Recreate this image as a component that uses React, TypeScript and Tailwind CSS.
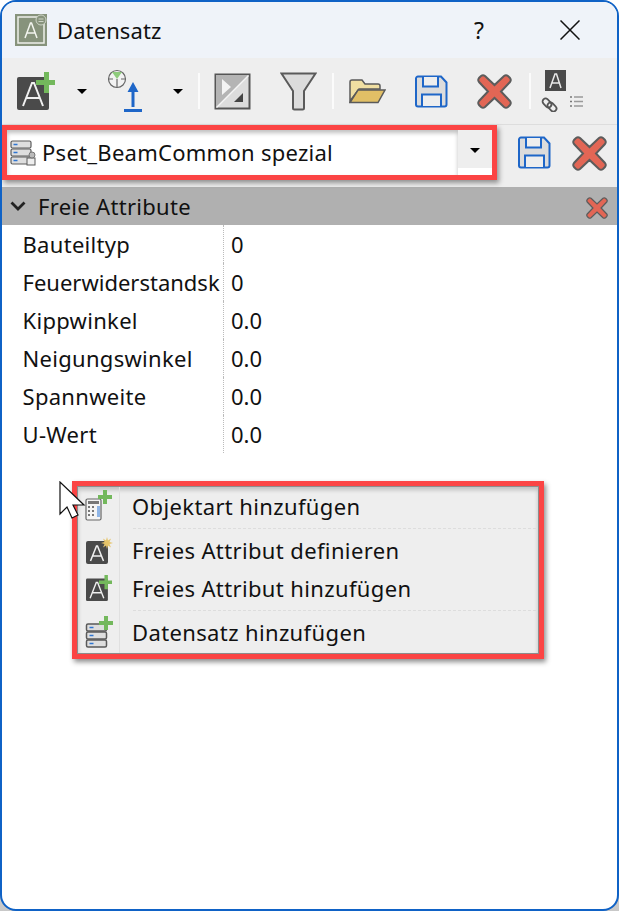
import React from 'react';

const attributes = [
  { name: 'Bauteiltyp', value: '0', tight: false },
  { name: 'Feuerwiderstandsk', value: '0', tight: true },
  { name: 'Kippwinkel', value: '0.0', tight: false },
  { name: 'Neigungswinkel', value: '0.0', tight: false },
  { name: 'Spannweite', value: '0.0', tight: false },
  { name: 'U-Wert', value: '0.0', tight: false },
];

function Plus({ x, y, s = 1 }: { x: number; y: number; s?: number }) {
  return (
    <path
      d={`M${x - 2 * s} ${y - 7 * s}h${4 * s}v${5 * s}h${5 * s}v${4 * s}h${-5 * s}v${5 * s}h${-4 * s}v${-5 * s}h${-5 * s}v${-4 * s}h${5 * s}z`}
      fill="#73b85c"
    />
  );
}

function AttributeIcon({ size = 38 }: { size?: number }) {
  return (
    <svg width={size} height={size} viewBox="0 0 38 38">
      <rect x="0" y="5" width="32" height="33" rx="2" fill="#4a4a4a" />
      <path d="M6 34 15 11h2l9 23M9.500 26h13" fill="none" stroke="#f0f0f0" strokeWidth="2" />
      <path d="M27 0h5v8h6v5h-6v8h-5v-8h-8V8h8z" fill="#73b85c" />
    </svg>
  );
}

function SaveIcon({ className = '' }: { className?: string }) {
  return (
    <svg className={className} width="33" height="33" viewBox="0 0 33 33">
      <path d="M3 1.500h23l5.500 6v22a2 2 0 0 1-2 2H3a2 2 0 0 1-2-2v-26a2 2 0 0 1 2-2z" fill="#dcdcdc" stroke="#1e66c8" strokeWidth="2" />
      <path d="M8 2v9.500h15V2M7 31V19.500h19V31" fill="#eeeeee" stroke="#1e66c8" strokeWidth="2" />
    </svg>
  );
}

function CloseIcon({ size = 35 }: { size?: number }) {
  return (
    <svg width={size} height={size} viewBox="0 0 35 35">
      <path
        d="M8 2 17.500 11 27 2q2-1.500 4 0l2 2q1.500 2 0 4l-9 9.500 9 9.500q1.500 2 0 4l-2 2q-2 1.500-4 0L17.500 24 8 33q-2 1.500-4 0l-2-2q-1.500-2 0-4l9-9.500L2 8q-1.500-2 0-4l2-2q2-1.500 4 0z"
        fill="#e26655"
        stroke="#5c5c5c"
        strokeWidth="2"
      />
    </svg>
  );
}

function Caret() {
  return <span className="block w-0 h-0 border-x-[5px] border-x-transparent border-t-[5px] border-t-black" />;
}

function DatasetIcon({ plus }: { plus?: boolean }) {
  return (
    <svg width="28" height="32" viewBox="0 0 28 32">
      {[8, 16, 24].map(y => (
        <g key={y}>
          <rect x="1.500" y={y} width="20" height="7" rx="1.500" fill="#dedede" stroke="#5a5a5a" strokeWidth="1.500" />
          <path d={`M4.500 ${y + 3.500}h4`} stroke="#2f76d2" strokeWidth="1.500" />
        </g>
      ))}
      {plus && <Plus x={21} y={7} />}
    </svg>
  );
}

function Separator() {
  return <div className="w-[2px] h-[36px] bg-[#fbfbfb]" />;
}

function MenuItem({ icon, label }: { icon: React.ReactNode; label: string }) {
  return (
    <div className="flex items-center h-[38px]">
      <div className="w-[42px] h-full flex items-center justify-center shrink-0">{icon}</div>
      <span className="pl-[12px] text-[22px] text-[#111] tracking-[0.37px] whitespace-nowrap">{label}</span>
    </div>
  );
}

export default function App() {
  return (
    <div className="w-[619px] h-[911px] bg-[linear-gradient(#ffffff_70%,#c8c8c8)] font-['Noto_Sans',sans-serif]">
      <div className="relative w-full h-full bg-white border-2 border-[#0f62c6] rounded-[16px] overflow-hidden">
        {/* title bar */}
        <div className="h-[56px] bg-[#eff3f9] flex items-center pl-[13px]">
          <svg width="32" height="32" viewBox="0 0 32 32">
            <rect width="32" height="32" fill="#87937c" />
            <path d="M26 3H3v26h26V9" fill="none" stroke="#eef0ea" strokeWidth="1.500" />
            <path d="M10 24 15.500 9h1L22 24M12 19h8" fill="none" stroke="#f2f4ee" strokeWidth="1.500" />
            <circle cx="26" cy="6" r="5" fill="#87937c" stroke="#cfd5c8" />
            <path d="M23.500 5h5M23.500 7.500h5" stroke="#cfd5c8" />
          </svg>
          <span className="ml-[10px] text-[22px] text-[#111] tracking-[0.1px]">Datensatz</span>
          <span className="ml-auto text-[23px] text-[#111] mr-[76px]">?</span>
          <svg className="mr-[37px]" width="20" height="20" viewBox="0 0 20 20">
            <path d="M.500.500l19 19M19.500.500l-19 19" stroke="#111" strokeWidth="1.500" />
          </svg>
        </div>

        {/* toolbar */}
        <div className="h-[66px] bg-[#eeeeee] flex items-center pl-[15px]">
          <AttributeIcon />
          <div className="ml-[22px]"><Caret /></div>
          <svg className="ml-[20px]" width="38" height="44" viewBox="0 0 38 44">
            <circle cx="10" cy="10" r="8.500" fill="#f2f2f2" stroke="#666" strokeWidth="1.200" />
            <path d="M5 3h10l-5 7z" fill="#8ecb7c" />
            <path d="M10 10v8M2 10h4M14 10h4" stroke="#666" strokeWidth="1.200" />
            <path d="M26 13 20.500 23h4v15h3V23h4z" fill="#1e66c8" />
            <path d="M17 41.500h18" stroke="#1e66c8" strokeWidth="3" />
          </svg>
          <div className="ml-[28px]"><Caret /></div>
          <div className="ml-[15px]"><Separator /></div>
          <svg className="ml-[14px]" width="37" height="37" viewBox="0 0 37 37">
            <rect x="1.500" y="1.500" width="34" height="34" fill="#dcdcdc" stroke="#555" strokeWidth="2" />
            <path d="M2 35V2h33z" fill="#b4b4b4" />
            <path d="M2.500 34.500l32-32" stroke="#f4f4f4" strokeWidth="1.500" />
            <path d="M8 6v16l9-8z" fill="#f4f4f4" />
            <path d="M29 20v9H20z" fill="#444" />
          </svg>
          <svg className="ml-[29px]" width="37" height="39" viewBox="0 0 37 39">
            <path d="M1.500 1.500h34L24 19v17a1.500 1.500 0 0 1-1.500 1.500h-8A1.500 1.500 0 0 1 13 36V19z" fill="#dcdcdc" stroke="#5a5a5a" strokeWidth="2" />
          </svg>
          <div className="ml-[15px]"><Separator /></div>
          <svg className="ml-[15px]" width="37" height="25" viewBox="0 0 37 25">
            <path d="M1 22V3q0-2 2-2h10l3 4h13q2 0 2 2v3H10z" fill="#f0dfa2" stroke="#5a5a5a" strokeWidth="1.500" />
            <path d="M1 23.500 9 11h27l-7 12.500z" fill="#e1bf66" stroke="#5a5a5a" strokeWidth="1.500" />
          </svg>
          <SaveIcon className="ml-[29px]" />
          <div className="ml-[29px]"><CloseIcon /></div>
          <div className="ml-[17px]"><Separator /></div>
          <svg className="ml-[10px]" width="46" height="42" viewBox="0 0 46 42">
            <rect x="4" y="0" width="21" height="21" fill="#4a4a4a" />
            <path d="M9 18 14 4h1.500L20 18M11 13h7" fill="none" stroke="#e8e8e8" strokeWidth="1.500" />
            <rect x="1" y="30" width="10" height="6" rx="3" transform="rotate(45 6 33)" fill="none" stroke="#555" strokeWidth="1.800" />
            <rect x="6" y="34" width="10" height="6" rx="3" transform="rotate(45 11 37)" fill="none" stroke="#555" strokeWidth="1.800" />
            <path d="M29 27h2M29 31.500h2M29 36h2" stroke="#777" strokeWidth="1.500" />
            <path d="M33 27h9M33 31.500h9M33 36h9" stroke="#999" strokeWidth="1.500" />
          </svg>
        </div>

        {/* dataset selector */}
        <div className="h-[63px] bg-[#eeeeee] flex items-start border-t border-[#dddddd]">
          <div className="w-[495px] h-[55px] border-[5px] border-[#fb4444] shadow-[2px_3px_5px_rgba(0,0,0,0.4)] bg-white flex items-start">
            <div className="flex-1 h-full flex items-center pl-[3px] shadow-[inset_0_3px_4px_rgba(0,0,0,0.25)]">
              <DatasetIconSmall />
              <span className="ml-[5px] text-[22px] text-[#111] tracking-[0.27px] whitespace-nowrap">Pset_BeamCommon spezial</span>
            </div>
            <div className="w-[34px] h-[38px] bg-[#eeeeee] flex items-center justify-center pt-[3px]"><Caret /></div>
          </div>
          <SaveIcon className="ml-[21px] mt-[11px]" />
          <div className="ml-[21px] mt-[11px]"><CloseIcon /></div>
        </div>

        {/* free attributes */}
        <div className="h-[38px] bg-[#b0b0b0] flex items-center pl-[8px] pr-[9px]">
          <svg width="16" height="10" viewBox="0 0 16 10">
            <path d="M1.500 1.500 8 8l6.500-6.500" fill="none" stroke="#222" strokeWidth="2.800" />
          </svg>
          <span className="ml-[12px] text-[22px] text-[#111] tracking-[0.3px]">Freie Attribute</span>
          <div className="ml-auto mt-[4px]"><CloseIcon size={22} /></div>
        </div>
        <div>
          {attributes.map(a => (
            <div key={a.name} className="flex h-[38px] items-center text-[22px] text-[#111]">
              <div className="w-[222px] pl-[20.500px] shrink-0 h-full flex items-center border-r border-dotted border-[#bbbbbb]">
                <span className={a.tight ? 'whitespace-nowrap' : 'whitespace-nowrap tracking-[0.3px]'}>{a.name}</span>
              </div>
              <span className="pl-[7px]">{a.value}</span>
            </div>
          ))}
        </div>

        {/* context menu */}
        <div className="absolute left-[70px] top-[479px] w-[472px] h-[178px] border-[5px] border-[#fb4444] shadow-[2px_3px_5px_rgba(0,0,0,0.45)]">
          <div className="relative w-full h-full bg-[#eeeeee] border border-[#8c8c8c] shadow-[inset_0_3px_4px_rgba(0,0,0,0.2)]">
            <div className="absolute left-[41px] top-0 bottom-0 w-px bg-[#e0e0e0]" />
            <MenuItem icon={<CalcIcon />} label="Objektart hinzufügen" />
            <div className="mt-[3px] mb-[2px] ml-[55px] mr-[2px] border-t border-dashed border-[#dddddd]" />
            <MenuItem icon={<StarAttributeIcon />} label="Freies Attribut definieren" />
            <MenuItem icon={<AttributeIcon size={26} />} label="Freies Attribut hinzufügen" />
            <div className="mt-[3px] mb-[2px] ml-[55px] mr-[2px] border-t border-dashed border-[#dddddd]" />
            <MenuItem icon={<DatasetIcon plus />} label="Datensatz hinzufügen" />
          </div>
        </div>

        {/* mouse cursor */}
        <svg className="absolute left-[57px] top-[479px]" width="27" height="38" viewBox="0 0 27 38">
          <path d="M1 1v32l7-7 5 11 6-3-5-10h11z" fill="#fff" stroke="#111" strokeWidth="1.200" />
        </svg>
      </div>
    </div>
  );
}

function DatasetIconSmall() {
  return (
    <svg width="27" height="26" viewBox="0 0 27 26">
      {[1, 9, 17].map(y => (
        <g key={y}>
          <rect x="1" y={y} width="20" height="7" rx="1.500" fill="#dedede" stroke="#5a5a5a" strokeWidth="1.200" />
          <path d={`M3.500 ${y + 3.500}h4`} stroke="#2f76d2" strokeWidth="1.500" />
        </g>
      ))}
      <rect x="17" y="18" width="8" height="7" fill="#eeeeee" stroke="#5a5a5a" />
      <circle cx="22" cy="15" r="3" fill="#bbbbbb" stroke="#777" />
    </svg>
  );
}

function CalcIcon() {
  return (
    <svg width="28" height="32" viewBox="0 0 28 32">
      <rect x="1" y="9" width="15" height="21" rx="1.500" fill="#f4f4f4" stroke="#666" strokeWidth="1.200" />
      <rect x="3" y="11" width="11" height="3" fill="#777" />
      {[16, 20, 24].map(y => (
        <path key={y} d={`M3 ${y + 1}h2M7 ${y + 1}h2`} stroke="#777" strokeWidth="2" />
      ))}
      <path d="M12 16h3v11h-3z" fill="#8fb5e6" />
      <Plus x={20} y={7} />
    </svg>
  );
}

function StarAttributeIcon() {
  return (
    <svg width="27" height="27" viewBox="0 0 27 27">
      <rect x="0" y="4" width="22" height="23" rx="2" fill="#4a4a4a" />
      <path d="M4.500 24 10.500 9h1L17.500 24M6.500 19h9" fill="none" stroke="#f0f0f0" strokeWidth="1.500" />
      <path d="M21 0l1 3.500 3-2-1.500 3.500 3.500 1-3.500 1 1.500 3.500-3-2-1 3.500-1-3.500-3 2 1.500-3.500-3.500-1 3.500-1-1.500-3.500 3 2z" fill="#e6c46a" />
    </svg>
  );
}
